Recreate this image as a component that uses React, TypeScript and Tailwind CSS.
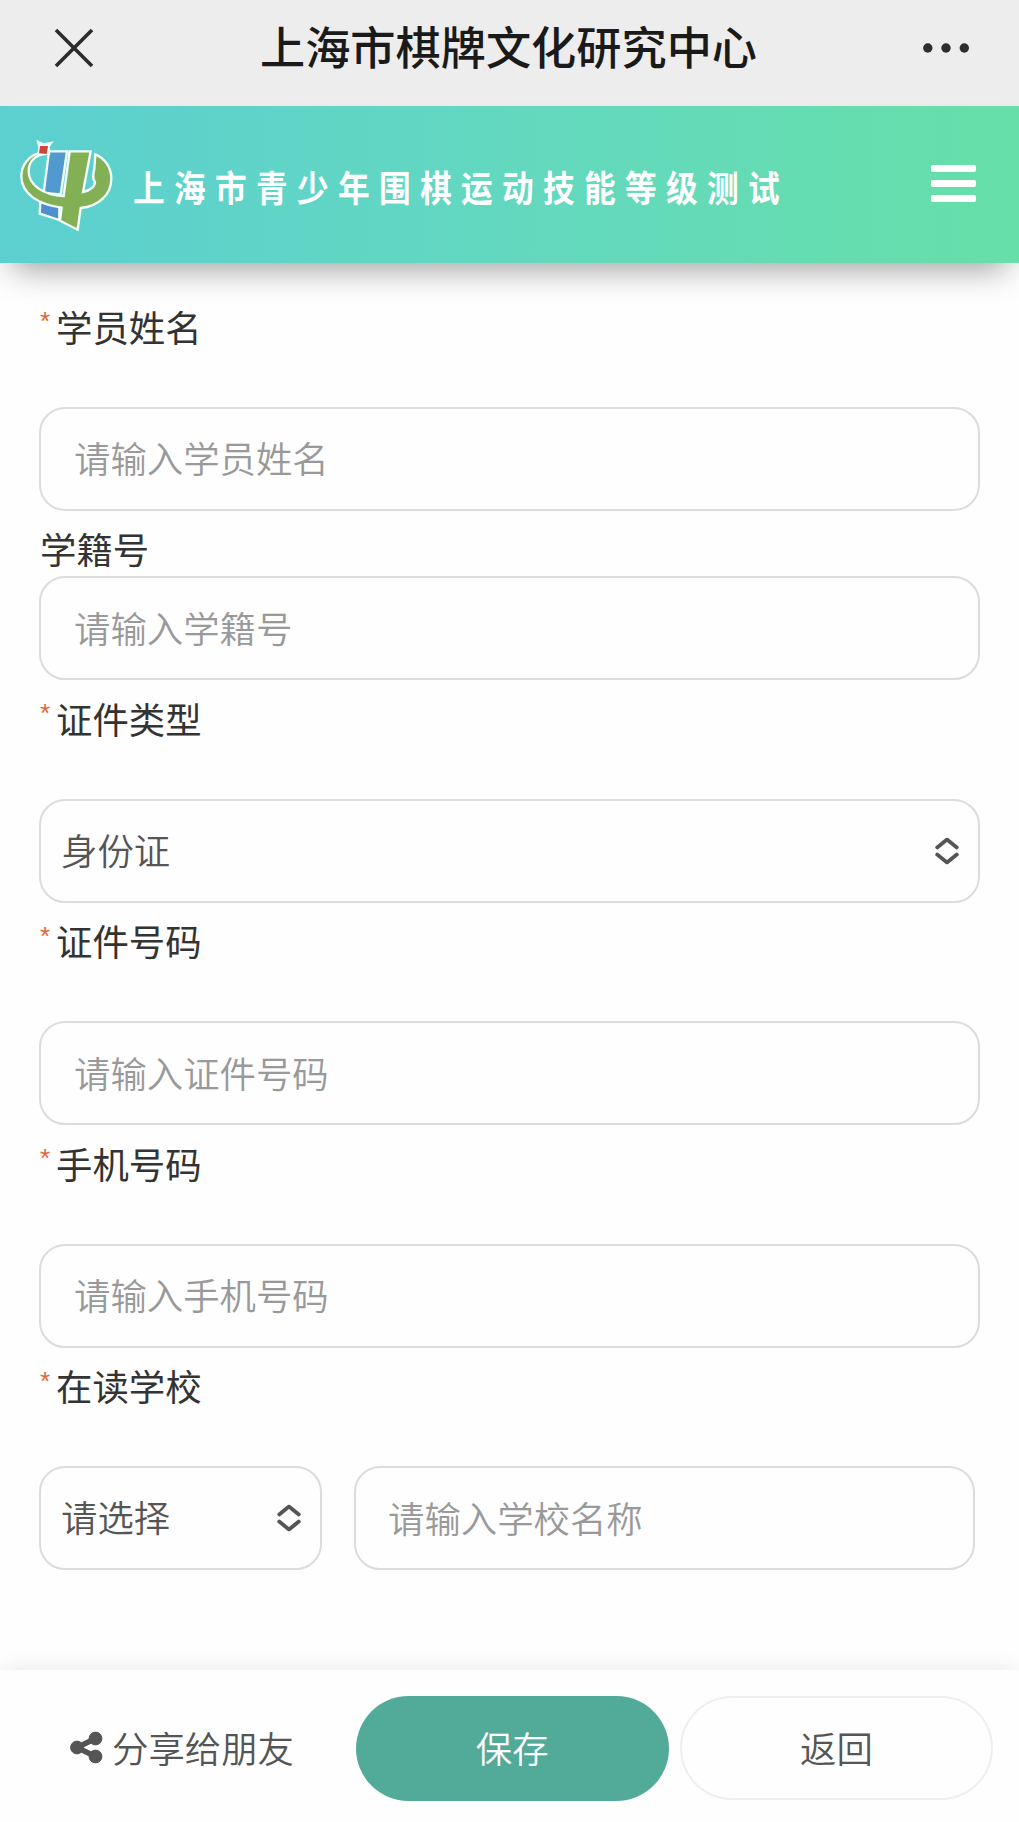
import React, { useState } from "react";

const fields = [
  { name: "studentName", label: "学员姓名", placeholder: "请输入学员姓名", required: true },
  { name: "studentNo", label: "学籍号", placeholder: "请输入学籍号", required: false },
  { name: "idType", label: "证件类型", options: ["身份证"], required: true },
  { name: "idNo", label: "证件号码", placeholder: "请输入证件号码", required: true },
  { name: "phone", label: "手机号码", placeholder: "请输入手机号码", required: true },
];

const boxClass =
  "block h-[104px] w-full rounded-[26px] border-2 border-[#dcdcdc] bg-transparent pb-[3px] text-[36.4px] font-[350] focus:outline-none focus:border-[#52aa98]";

function Logo() {
  return (
    <svg viewBox="54 54 288 288" className="h-24 w-24 shrink-0" fill="none">
      {/* Blue stroke */}
      <path d="M147 97 L201 97 L182 226 L131 222 Z" fill="#5299cf" stroke="#f2fffb" strokeWidth="7" />
      <path d="M121 250 L178 262 L178 303 L119 284 Z" fill="#4f8fd0" stroke="#f2fffb" strokeWidth="7" />
      {/* Green body */}
      <path
        d="M209 97 L272 97 L249 219 C270 215 285 203 285 189 C276 178 279 165 283 150 L286 106 C315 118 334 146 334 179 C334 226 296 263 242 267 L233 332 L180 305 L185 266 C118 257 64 226 64 172 C64 137 88 108 122 101 L136 105 C106 108 86 127 86 157 C86 197 128 229 191 231 Z"
        fill="#83b055"
        stroke="#f2fffb"
        strokeWidth="7"
        strokeLinejoin="miter"
      />
      {/* Red star */}
      <path d="M109 62 L130 73 L161 67 L149 84 L151 108 L131 107 L112 109 L115 84 Z" fill="#f2fffb" />
      <path d="M120 81 L144 81 L140 105 L117 103 Z" fill="#cb4638" />
    </svg>
  );
}

function SelectArrows() {
  return (
    <svg
      viewBox="0 0 24 28"
      className="pointer-events-none absolute right-[21px] top-[38px] h-7 w-6"
      fill="none"
      stroke="#555"
      strokeWidth="3.8"
      strokeLinecap="round"
      strokeLinejoin="round"
    >
      <path d="M2.2 10.4 L12 2.6 L21.8 10.4" />
      <path d="M2.2 17.6 L12 25.4 L21.8 17.6" />
    </svg>
  );
}

function Label({ text, required }: { text: string; required: boolean }) {
  return (
    <label
      className={
        required
          ? "mt-3 mb-[54.5px] flex h-[52px] items-center text-[36.4px] text-[#333]"
          : "mt-[11.5px] mb-[2px] flex h-[52px] items-center pl-px text-[36.4px] text-[#333]"
      }
    >
      {required && (
        <span className="w-[17px] self-start pt-2 pl-px font-['Liberation_Sans'] text-[26px] leading-[26px] text-[#e0653c]">
          *
        </span>
      )}
      {text}
    </label>
  );
}

export default function App() {
  const [form, setForm] = useState<Record<string, string>>({});

  const handleChange = (e: React.ChangeEvent<HTMLInputElement | HTMLSelectElement>) => {
    setForm({ ...form, [e.target.name]: e.target.value });
  };

  return (
    <div className="flex h-[1822px] w-full flex-col overflow-hidden bg-[#fefefe] font-['Noto_Sans_CJK_SC',sans-serif]">
      {/* Title bar */}
      <header className="flex h-[106px] shrink-0 items-center justify-between bg-[#ededed] pr-[50px] pb-[11px] pl-[54px]">
        <svg viewBox="0 0 40 40" className="h-10 w-10" stroke="#2b2b2b" strokeWidth="3.6" strokeLinecap="butt">
          <path d="M2 2 L38 38 M38 2 L2 38" />
        </svg>
        <h1 className="mb-[3px] text-[45.2px] leading-none font-medium text-[#1a1a1a]">上海市棋牌文化研究中心</h1>
        <svg viewBox="0 0 46 10" className="h-[10px] w-[46px]" fill="#2e2e2e">
          <circle cx="4.8" cy="5" r="4.7" />
          <circle cx="23" cy="5" r="4.7" />
          <circle cx="41.3" cy="5" r="4.7" />
        </svg>
      </header>

      {/* Banner */}
      <div className="z-10 flex h-[157px] shrink-0 items-center bg-linear-to-r from-[#5ccfd0] via-[#63d8bf] to-[#66dfa8] pr-[43px] pl-[18px] shadow-[0_18px_30px_-12px_rgba(0,0,0,0.38)]">
        <Logo />
        <span className="mt-[3px] ml-[19px] origin-left scale-x-88 text-[36px] leading-none font-bold tracking-[10.6px] whitespace-nowrap text-white">
          上海市青少年围棋运动技能等级测试
        </span>
        <button type="button" className="-mt-0.5 ml-auto flex w-[45px] flex-col gap-[7.5px]">
          <span className="h-[7.5px] rounded-xs bg-white" />
          <span className="h-[7.5px] rounded-xs bg-white" />
          <span className="h-[7.5px] rounded-xs bg-white" />
        </button>
      </div>

      {/* Form */}
      <form className="flex-1 px-[39px] pt-[25px]">
        {fields.map((f) => (
          <div key={f.name}>
            <Label text={f.label} required={f.required} />
            {f.options ? (
              <div className="relative">
                <select
                  name={f.name}
                  value={form[f.name]}
                  onChange={handleChange}
                  className={`${boxClass} appearance-none pl-5 text-[#555]`}
                >
                  {f.options.map((o) => (
                    <option key={o}>{o}</option>
                  ))}
                </select>
                <SelectArrows />
              </div>
            ) : (
              <input
                name={f.name}
                value={form[f.name] ?? ""}
                onChange={handleChange}
                placeholder={f.placeholder}
                className={`${boxClass} px-[33px] text-[#555] placeholder-[#999]`}
              />
            )}
          </div>
        ))}

        {/* School */}
        <Label text="在读学校" required />
        <div className="flex gap-8 pr-[5px]">
          <div className="relative w-[283px] shrink-0">
            <select name="district" className={`${boxClass} appearance-none pl-5 text-[#555]`}>
              <option>请选择</option>
            </select>
            <SelectArrows />
          </div>
          <input
            name="school"
            value={form.school ?? ""}
            onChange={handleChange}
            placeholder="请输入学校名称"
            className={`${boxClass} px-8 text-[#555] placeholder-[#999]`}
          />
        </div>
      </form>

      {/* Bottom actions */}
      <footer className="flex h-[152px] shrink-0 items-center bg-[#fefefe] pt-1 pr-[26px] pl-[70px] text-[36.4px] font-[350] text-[#555] shadow-[0_-8px_18px_-4px_rgba(0,0,0,0.07)]">
        <button type="button" className="flex w-[285.5px] items-center gap-[9px]">
          <svg viewBox="0 0 33 33" className="h-[33px] w-[33px]" fill="#555" stroke="#555">
            <path d="M25.5 7.5 L7 16.5 L25.5 25.5" fill="none" strokeWidth="5.5" />
            <circle cx="25.5" cy="7.5" r="6.4" />
            <circle cx="7" cy="16.5" r="6.4" />
            <circle cx="25.5" cy="25.5" r="6.4" />
          </svg>
          <span className="-mt-0.5">分享给朋友</span>
        </button>
        <button type="button" className="h-[105px] w-[313.5px] rounded-full bg-[#52aa98] pb-0.5 text-white">
          保存
        </button>
        <button type="button" className="ml-[11px] h-[104px] flex-1 rounded-full border-2 border-[#efefef] pb-0.5">
          返回
        </button>
      </footer>
    </div>
  );
}
